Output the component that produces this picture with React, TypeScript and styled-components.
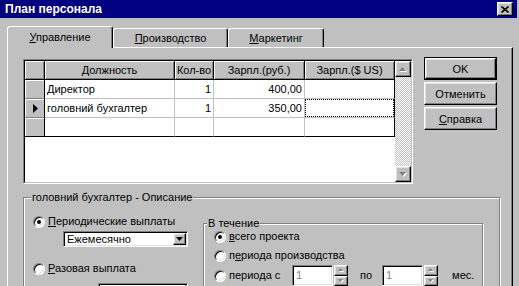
import React from 'react';
import styled, { createGlobalStyle, css } from 'styled-components';

const GlobalStyle = createGlobalStyle`
    * {
        box-sizing: border-box;
    }
    body {
        margin: 0;
        background: #c0c0c0;
        font-family: "Liberation Sans", Arial, sans-serif;
        font-size: 11px;
        color: #000;
    }
`;

// win95 3d edges
const raised = css`
    border: 1px solid;
    border-color: #fff #000 #000 #fff;
    box-shadow: inset -1px -1px 0 #808080, inset 1px 1px 0 #dfdfdf;
`;

const sunkenText = css`
    border: 1px solid;
    border-color: #808080 #fff #fff #808080;
    box-shadow: inset 1px 1px 0 #000, inset -1px -1px 0 #dfdfdf;
`;

const Window = styled.div`
    width: 519px;
    height: 286px;
    overflow: hidden;
    background: #c0c0c0;
    display: flex;
    flex-direction: column;
`;

const TitleBar = styled.div`
    flex: none;
    height: 18px;
    margin-right: 2px;
    padding: 0 4px 0 5px;
    background: #000080;
    color: #fff;
    font-weight: bold;
    font-size: 12px;
    display: flex;
    align-items: center;
    justify-content: space-between;
`;

const CloseButton = styled.div`
    ${raised};
    width: 16px;
    height: 14px;
    background: #c0c0c0;
    display: flex;
    align-items: center;
    justify-content: center;
`;

const Content = styled.div`
    flex: 1;
    min-height: 0;
    padding: 8px 6px 0 7px;
    display: flex;
    flex-direction: column;
`;

const TabStrip = styled.div`
    flex: none;
    height: 21px;
    display: flex;
    align-items: flex-end;
    position: relative;
    z-index: 1;
`;

const Tab = styled.div<{ $active?: boolean; $width: number }>`
    width: ${(p) => p.$width}px;
    height: ${(p) => (p.$active ? 22 : 19)}px;
    margin-bottom: ${(p) => (p.$active ? -1 : 0)}px;
    background: #c0c0c0;
    border-top: 1px solid #fff;
    border-left: 1px solid #fff;
    border-right: 1px solid #000;
    border-radius: 3px 3px 0 0;
    box-shadow: inset -1px 0 0 #808080;
    display: flex;
    align-items: center;
    justify-content: center;
    padding-bottom: ${(p) => (p.$active ? 2 : 0)}px;
`;

const TabPage = styled.div`
    flex: 1;
    border-top: 1px solid #fff;
    border-left: 1px solid #fff;
    border-right: 1px solid #000;
    box-shadow: inset -1px 0 0 #808080;
    padding: 11px 0 0 15px;
`;

const TopRow = styled.div`
    display: flex;
    align-items: flex-start;
    gap: 11px;
`;

const GridFrame = styled.div`
    width: 390px;
    height: 125px;
    border: 1px solid;
    border-color: #808080 #fff #fff #808080;
`;

const GridInner = styled.div`
    height: 100%;
    border: 1px solid;
    border-color: #000 #c0c0c0 #c0c0c0 #000;
    background: #fff;
    display: flex;
`;

const GridTable = styled.div`
    flex: 1;
    display: grid;
    grid-template-columns: 20px 130px 39px 91px 90px;
    grid-auto-rows: 19px;
    align-content: start;
`;

const HeadCell = styled.div`
    background: #c0c0c0;
    border-right: 1px solid #000;
    border-bottom: 1px solid #000;
    box-shadow: inset 1px 1px 0 #fff, inset -1px -1px 0 #808080;
    text-align: center;
    line-height: 18px;
    white-space: nowrap;
    overflow: hidden;
`;

const IndicatorCell = styled.div<{ $last?: boolean }>`
    background: #c0c0c0;
    border-right: 1px solid #000;
    border-bottom: 1px solid ${(p) => (p.$last ? '#000' : '#808080')};
    box-shadow: inset 1px 1px 0 #fff;
    display: flex;
    align-items: center;
    padding-left: 8px;
`;

const DataCell = styled.div<{ $right?: boolean; $lastCol?: boolean; $lastRow?: boolean; $focus?: boolean }>`
    position: relative;
    border-right: 1px solid ${(p) => (p.$lastCol ? '#000' : '#c0c0c0')};
    border-bottom: 1px solid ${(p) => (p.$lastRow ? '#000' : '#c0c0c0')};
    padding: 0 2px;
    line-height: 18px;
    text-align: ${(p) => (p.$right ? 'right' : 'left')};
    white-space: nowrap;
    overflow: hidden;
    ${(p) =>
        p.$focus &&
        css`
            &::after {
                content: '';
                position: absolute;
                inset: 0;
                border: 1px dotted #000;
            }
        `}
`;

const ScrollBar = styled.div`
    width: 16px;
    display: flex;
    flex-direction: column;
`;

const ScrollButton = styled.div`
    ${raised};
    flex: none;
    height: 16px;
    background: #c0c0c0;
    display: flex;
    align-items: center;
    justify-content: center;
`;

const ScrollTrack = styled.div`
    flex: 1;
    background: repeating-conic-gradient(#c0c0c0 0 25%, #fff 0 50%) 0 0 / 2px 2px;
`;

const ButtonColumn = styled.div`
    margin-top: -2px;
    display: flex;
    flex-direction: column;
    gap: 2px;
`;

const DefaultFrame = styled.div`
    border: 1px solid #000;
`;

const Button = styled.div<{ $default?: boolean }>`
    ${raised};
    width: ${(p) => (p.$default ? 71 : 73)}px;
    height: ${(p) => (p.$default ? 21 : 23)}px;
    background: #c0c0c0;
    display: flex;
    align-items: center;
    justify-content: center;
`;

const Group = styled.fieldset<{ $width: number }>`
    width: ${(p) => p.$width}px;
    margin: 0;
    padding: 0;
    border: 1px solid #808080;
    box-shadow: inset 1px 1px 0 #fff, 1px 1px 0 #fff;
    min-width: 0;
`;

const Legend = styled.legend<{ $indent: number }>`
    margin-left: ${(p) => p.$indent}px;
    padding: 0 1px;
    line-height: 13px;
    background: #c0c0c0;
`;

const DescGroup = styled(Group)`
    margin-top: 7px;
    height: 120px;
`;

const DescBody = styled.div`
    display: flex;
    align-items: flex-start;
    padding: 11px 0 0 9px;
`;

const LeftCol = styled.div`
    width: 170px;
    display: flex;
    flex-direction: column;
`;

const PeriodGroup = styled(Group)`
    margin-top: 2px;
    height: 90px;
`;

const PeriodBody = styled.div`
    padding: 0 0 0 10px;
    display: flex;
    flex-direction: column;
`;

const RadioRow = styled.label<{ $gapTop?: number; $tall?: boolean }>`
    display: flex;
    align-items: center;
    gap: 3px;
    height: ${(p) => (p.$tall ? 21 : 13)}px;
    line-height: 13px;
    margin-top: ${(p) => p.$gapTop ?? 0}px;
    white-space: nowrap;
`;

const RadioCircle = styled.span<{ $checked?: boolean }>`
    flex: none;
    position: relative;
    width: 12px;
    height: 12px;
    border-radius: 50%;
    border: 1px solid;
    border-color: #808080 #fff #fff #808080;
    box-shadow: inset 1px 1px 0 #000, inset -1px -1px 0 #dfdfdf;
    background: #fff;
    ${(p) =>
        p.$checked &&
        css`
            &::after {
                content: '';
                position: absolute;
                left: 3px;
                top: 3px;
                width: 4px;
                height: 4px;
                border-radius: 50%;
                background: #000;
            }
        `}
`;

const Combo = styled.div<{ $width: number; $left: number; $gapTop: number }>`
    ${sunkenText};
    width: ${(p) => p.$width}px;
    height: 16px;
    margin: ${(p) => p.$gapTop}px 0 0 ${(p) => p.$left}px;
    background: #fff;
    display: flex;
    align-items: stretch;
    padding: 1px;
`;

const ComboText = styled.div`
    flex: 1;
    padding-left: 2px;
    line-height: 12px;
`;

const ComboButton = styled.div`
    ${raised};
    width: 13px;
    background: #c0c0c0;
    display: flex;
    align-items: center;
    justify-content: center;
`;

const FixedLabel = styled.span<{ $width: number }>`
    width: ${(p) => p.$width}px;
`;

const Spin = styled.div`
    display: flex;
    height: 21px;
`;

const SpinEdit = styled.div`
    ${sunkenText};
    width: 41px;
    background: #fff;
    color: #808080;
    padding: 3px 0 0 3px;
`;

const SpinButtons = styled.div`
    width: 14px;
    margin-left: 1px;
    display: flex;
    flex-direction: column;
`;

const SpinHalf = styled.div`
    ${raised};
    flex: 1;
    background: #c0c0c0;
    display: flex;
    align-items: center;
    justify-content: center;
`;

const Word = styled.span<{ $left: number; $right: number }>`
    margin: 0 ${(p) => p.$right}px 0 ${(p) => p.$left}px;
`;

const DownArrow = ({ color = '#000' }: { color?: string }) => (
    <svg width="7" height="4" viewBox="0 0 7 4">
        <polygon points="0,0 7,0 3.5,4" fill={color} />
    </svg>
);

const GrayArrow = ({ up, size = 7 }: { up?: boolean; size?: number }) => {
    const h = Math.ceil(size / 2);
    const pts = up ? `0,${h} ${size},${h} ${size / 2},0` : `0,0 ${size},0 ${size / 2},${h}`;
    return (
        <svg width={size + 1} height={h + 1} viewBox={`0 0 ${size + 1} ${h + 1}`}>
            <polygon points={pts} fill="#fff" transform="translate(1,1)" />
            <polygon points={pts} fill="#808080" />
        </svg>
    );
};

const rows = [
    { name: 'Директор', qty: '1', rub: '400,00' },
    { name: 'головний бухгалтер', qty: '1', rub: '350,00', current: true },
    { name: '', qty: '', rub: '' },
];

const SpinBox = () => (
    <Spin>
        <SpinEdit>1</SpinEdit>
        <SpinButtons>
            <SpinHalf>
                <GrayArrow up size={5} />
            </SpinHalf>
            <SpinHalf>
                <GrayArrow size={5} />
            </SpinHalf>
        </SpinButtons>
    </Spin>
);

export default function App() {
    return (
        <Window>
            <GlobalStyle />
            <TitleBar>
                План персонала
                <CloseButton>
                    <svg width="8" height="7" viewBox="0 0 8 7">
                        <path d="M0.5 0.5 L7.5 6.5 M7.5 0.5 L0.5 6.5" stroke="#000" strokeWidth="1.6" />
                    </svg>
                </CloseButton>
            </TitleBar>
            <Content>
                <TabStrip>
                    <Tab $active $width={106}>
                        <span>
                            <u>У</u>правление
                        </span>
                    </Tab>
                    <Tab $width={115}>
                        <span>
                            <u>П</u>роизводство
                        </span>
                    </Tab>
                    <Tab $width={96}>
                        <span>
                            <u>М</u>аркетинг
                        </span>
                    </Tab>
                </TabStrip>
                <TabPage>
                    <TopRow>
                        <GridFrame>
                            <GridInner>
                                <GridTable>
                                    <HeadCell />
                                    <HeadCell>Должность</HeadCell>
                                    <HeadCell>Кол-во</HeadCell>
                                    <HeadCell>Зарпл.(руб.)</HeadCell>
                                    <HeadCell>Зарпл.($ US)</HeadCell>
                                    {rows.map((r, i) => {
                                        const last = i === rows.length - 1;
                                        return (
                                            <React.Fragment key={i}>
                                                <IndicatorCell $last={last}>
                                                    {r.current && (
                                                        <svg width="5" height="9" viewBox="0 0 5 9">
                                                            <polygon points="0,0 5,4.5 0,9" fill="#000" />
                                                        </svg>
                                                    )}
                                                </IndicatorCell>
                                                <DataCell $lastRow={last}>{r.name}</DataCell>
                                                <DataCell $right $lastRow={last}>
                                                    {r.qty}
                                                </DataCell>
                                                <DataCell $right $lastRow={last}>
                                                    {r.rub}
                                                </DataCell>
                                                <DataCell $lastCol $lastRow={last} $focus={r.current} />
                                            </React.Fragment>
                                        );
                                    })}
                                </GridTable>
                                <ScrollBar>
                                    <ScrollButton>
                                        <GrayArrow up />
                                    </ScrollButton>
                                    <ScrollTrack />
                                    <ScrollButton>
                                        <GrayArrow />
                                    </ScrollButton>
                                </ScrollBar>
                            </GridInner>
                        </GridFrame>
                        <ButtonColumn>
                            <DefaultFrame>
                                <Button $default>OK</Button>
                            </DefaultFrame>
                            <Button>Отменить</Button>
                            <Button>
                                <span>
                                    <u>С</u>правка
                                </span>
                            </Button>
                        </ButtonColumn>
                    </TopRow>
                    <DescGroup $width={477}>
                        <Legend $indent={7}>головний бухгалтер - Описание</Legend>
                        <DescBody>
                            <LeftCol>
                                <RadioRow>
                                    <RadioCircle $checked />
                                    <span>
                                        <u>П</u>ериодические выплаты
                                    </span>
                                </RadioRow>
                                <Combo $width={125} $left={30} $gapTop={3}>
                                    <ComboText>Ежемесячно</ComboText>
                                    <ComboButton>
                                        <DownArrow />
                                    </ComboButton>
                                </Combo>
                                <RadioRow $gapTop={15}>
                                    <RadioCircle />
                                    <span>
                                        <u>Р</u>азовая выплата
                                    </span>
                                </RadioRow>
                                <Combo $width={90} $left={65} $gapTop={8}>
                                    <ComboText />
                                    <ComboButton>
                                        <DownArrow color="#808080" />
                                    </ComboButton>
                                </Combo>
                            </LeftCol>
                            <PeriodGroup $width={280}>
                                <Legend $indent={3}>В течение</Legend>
                                <PeriodBody>
                                    <RadioRow>
                                        <RadioCircle $checked />
                                        <span>
                                            <u>в</u>сего проекта
                                        </span>
                                    </RadioRow>
                                    <RadioRow $gapTop={6}>
                                        <RadioCircle />
                                        <span>
                                            п<u>е</u>риода производства
                                        </span>
                                    </RadioRow>
                                    <RadioRow $gapTop={3} $tall>
                                        <RadioCircle />
                                        <FixedLabel $width={60}>
                                            перио<u>д</u>а с
                                        </FixedLabel>
                                        <SpinBox />
                                        <Word $left={9} $right={7}>
                                            по
                                        </Word>
                                        <SpinBox />
                                        <Word $left={11} $right={0}>
                                            мес.
                                        </Word>
                                    </RadioRow>
                                </PeriodBody>
                            </PeriodGroup>
                        </DescBody>
                    </DescGroup>
                </TabPage>
            </Content>
        </Window>
    );
}
